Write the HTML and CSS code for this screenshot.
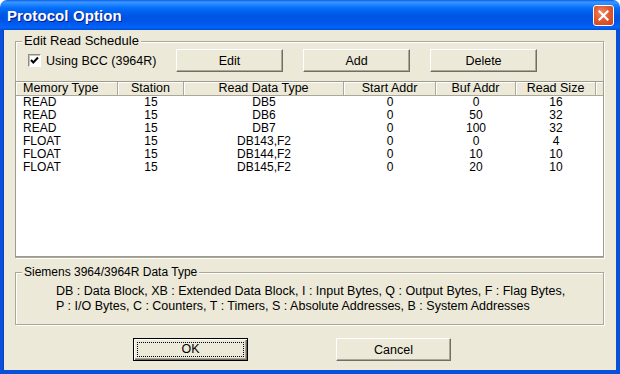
FILE: index.html
```html
<!DOCTYPE html>
<html lang="en">

<head>
    <meta charset="UTF-8">
    <meta name="viewport" content="width=device-width, initial-scale=1.0">
    <title>Protocol Option</title>
    <link rel="stylesheet" href="styles.css">
</head>

<body>
    <div class="window">
        <!-- 标题栏 -->
        <div class="titlebar">
            <span class="title">Protocol Option</span>
            <button class="close" title="Close">
                <svg width="11" height="11" viewBox="0 0 11 11">
                    <path d="M1.5 1.5 L9.5 9.5 M9.5 1.5 L1.5 9.5" stroke="#fff" stroke-width="2.2" stroke-linecap="square" />
                </svg>
            </button>
        </div>

        <div class="client">
            <!-- 读取计划 -->
            <div class="group group-schedule">
                <span class="group-label">Edit Read Schedule</span>
                <div class="toolbar">
                    <label class="check">
                        <span class="check-box">
                            <svg width="11" height="11" viewBox="0 0 11 11">
                                <path d="M2 5 L4.3 7.5 L9 2.5" fill="none" stroke="#000" stroke-width="2" />
                            </svg>
                        </span>
                        Using BCC (3964R)
                    </label>
                    <button class="btn btn-tool">Edit</button>
                    <button class="btn btn-tool">Add</button>
                    <button class="btn btn-tool">Delete</button>
                </div>
                <div class="list">
                    <div class="list-head">
                        <div class="hcell first">Memory Type</div>
                        <div class="hcell">Station</div>
                        <div class="hcell">Read Data Type</div>
                        <div class="hcell">Start Addr</div>
                        <div class="hcell">Buf Addr</div>
                        <div class="hcell">Read Size</div>
                        <div class="hcell filler"></div>
                    </div>
                    <div class="list-row"><span class="first">READ</span><span>15</span><span>DB5</span><span>0</span><span>0</span><span>16</span></div>
                    <div class="list-row"><span class="first">READ</span><span>15</span><span>DB6</span><span>0</span><span>50</span><span>32</span></div>
                    <div class="list-row"><span class="first">READ</span><span>15</span><span>DB7</span><span>0</span><span>100</span><span>32</span></div>
                    <div class="list-row"><span class="first">FLOAT</span><span>15</span><span>DB143,F2</span><span>0</span><span>0</span><span>4</span></div>
                    <div class="list-row"><span class="first">FLOAT</span><span>15</span><span>DB144,F2</span><span>0</span><span>10</span><span>10</span></div>
                    <div class="list-row"><span class="first">FLOAT</span><span>15</span><span>DB145,F2</span><span>0</span><span>20</span><span>10</span></div>
                </div>
            </div>

            <!-- 数据类型说明 -->
            <div class="group group-info">
                <span class="group-label small">Siemens 3964/3964R Data Type</span>
                <p class="info">
                    DB : Data Block, XB : Extended Data Block, I : Input Bytes, Q : Output Bytes, F : Flag Bytes,<br>
                    P : I/O Bytes, C : Counters, T : Timers, S : Absolute Addresses, B : System Addresses
                </p>
            </div>

            <div class="actions">
                <button class="btn btn-action btn-default"><span class="focus">OK</span></button>
                <button class="btn btn-action">Cancel</button>
            </div>
        </div>
    </div>
</body>

</html>
```

FILE: styles.css
```css
/* 基本样式 */

body {
    margin: 0;
    background: #fff;
    font-family: "Liberation Sans", Arial, sans-serif;
    color: #000;
}

.window {
    width: 620px;
    height: 374px;
    display: flex;
    flex-direction: column;
}

/******************** 标题栏 ***********************/

.titlebar {
    height: 30px;
    flex: none;
    box-sizing: border-box;
    display: flex;
    align-items: center;
    justify-content: space-between;
    padding: 0 6px 0 7px;
    border-radius: 7px 7px 0 0;
    background: linear-gradient(to bottom,
            #0a5ee8 0, #3d95ff 2px, #2a8bff 4px, #127dff 6px, #0470fc 8px,
            #0263ef 11px, #0058e6 15px, #0054e3 18px, #0056ea 22px,
            #015cf3 25px, #0265f8 27px, #0058e8 29px, #004ed8 30px);
}

.title {
    font-size: 15px;
    font-weight: bold;
    color: #fff;
    text-shadow: 1px 1px 0 #0a1b8f;
    letter-spacing: 0.1px;
}

.close {
    width: 21px;
    height: 21px;
    padding: 0;
    margin-top: 1px;
    border: 1px solid #fff;
    border-radius: 3px;
    background: radial-gradient(circle at 40% 35%, #f08a64 0, #e25a32 45%, #c8421c 100%);
    display: flex;
    align-items: center;
    justify-content: center;
}

/******************** 窗口主体 ***********************/

.client {
    flex: auto;
    background: #ece9d8;
    border: 0 solid #0a4fd8;
    border-width: 0 4px 4px 3px;
    box-shadow: inset 1px 0 0 #0840c8;
    padding: 11px 12px 0;
}

.group {
    position: relative;
    border: 1px solid #aca899;
    box-shadow: 1px 1px 0 #fff, inset 1px 1px 0 #fff;
}

.group-label {
    position: absolute;
    top: -8px;
    left: 6px;
    padding: 0 2px;
    background: #ece9d8;
    font-size: 13px;
    line-height: 14px;
}

.group-label.small {
    font-size: 12px;
}

/******************** 读取计划 ***********************/

.group-schedule {
    padding-top: 7px;
}

.toolbar {
    display: flex;
    height: 23px;
}

.check {
    width: 148px;
    padding-left: 12px;
    display: flex;
    align-items: center;
    gap: 5px;
    font-size: 12.5px;
}

.check-box {
    width: 13px;
    height: 13px;
    box-sizing: border-box;
    background: #fff;
    border: 1px solid;
    border-color: #8c8c84 #fff #fff #8c8c84;
    box-shadow: inset 1px 1px 0 #c8c5b6;
    display: flex;
    align-items: center;
    justify-content: center;
}

.btn {
    box-sizing: border-box;
    height: 23px;
    padding: 0;
    background: #ece9d8;
    border: 1px solid;
    border-color: #fff #716f64 #716f64 #fff;
    box-shadow: inset -1px -1px 0 #aca899;
    font-family: inherit;
    font-size: 12.5px;
    color: #000;
}

.btn-tool {
    width: 107px;
    margin-right: 20px;
}

.list {
    margin: 9px -1px 0;
    height: 176px;
    box-sizing: border-box;
    border: 1px solid #9d9b90;
    background: #fff;
}

.list-head,
.list-row {
    display: grid;
    grid-template-columns: 102px 66px 160px 92px 80px 80px 1fr;
}

.hcell {
    height: 14px;
    box-sizing: border-box;
    background: #ece9d8;
    border-right: 1px solid #aca899;
    border-bottom: 1px solid #aca899;
    box-shadow: inset 1px 1px 0 #fff;
    font-size: 12.5px;
    line-height: 13px;
    text-align: center;
    white-space: nowrap;
    overflow: hidden;
}

.hcell.filler {
    border-right: 0;
}

.list-row span {
    height: 13px;
    font-size: 12px;
    line-height: 13px;
    text-align: center;
}

.list .first {
    text-align: left;
    padding-left: 7px;
}

/******************** 数据类型说明 ***********************/

.group-info {
    margin-top: 14px;
    padding: 11px 0 10px 40px;
}

.info {
    margin: 0;
    font-size: 12.5px;
    line-height: 15px;
}

/******************** 底部按钮 ***********************/

.actions {
    display: flex;
    gap: 88px;
    margin-top: 13px;
    padding-left: 118px;
}

.btn-action {
    width: 115px;
}

.btn-default {
    border: 1px solid #000;
    box-shadow: inset 1px 1px 0 #fff, inset -1px -1px 0 #716f64, inset -2px -2px 0 #aca899;
    padding: 3px;
}

.btn-default .focus {
    display: block;
    height: 100%;
    box-sizing: border-box;
    border: 1px dotted #000;
    line-height: 13px;
}
```
